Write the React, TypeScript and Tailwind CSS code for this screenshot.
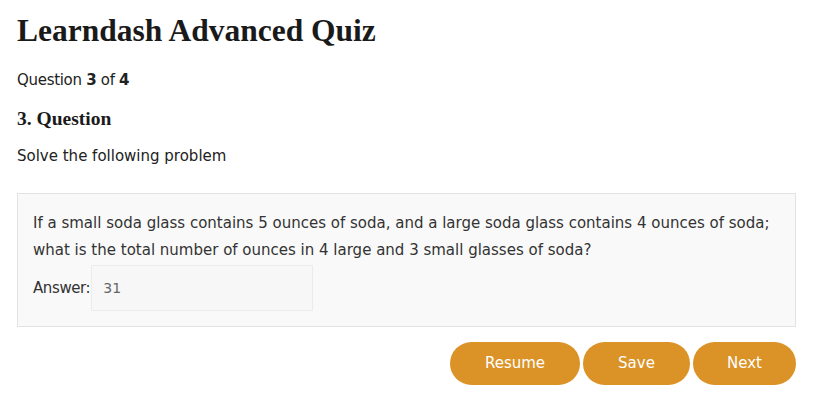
import { FC } from 'react';

const serif = { fontFamily: '"Liberation Serif", "DejaVu Serif", serif' };

const QuizButton: FC<{ label: string; className?: string }> = ({ label, className }) => (
  <button
    type="button"
    className={`h-[43px] rounded-full bg-[#db9327] text-[15px] text-white ${className ?? ''}`}
  >
    {label}
  </button>
);

const App: FC = () => {
  return (
    <div
      className="min-h-[404px] w-[835px] bg-white px-[17px] pt-[12px] text-[#222] text-[15px]"
      style={{ fontFamily: '"DejaVu Sans", "Noto Sans", sans-serif' }}
    >
      <h1 className="text-[31.5px] font-bold leading-[38px] text-[#1a1a1a]" style={serif}>
        Learndash Advanced Quiz
      </h1>

      <div className="mt-[20px] leading-[20px] tracking-[-0.3px]">
        Question <span className="font-bold">3</span> of <span className="font-bold">4</span>
      </div>

      <h3 className="mt-[18px] text-[19.5px] font-bold leading-[22px] text-[#1a1a1a]" style={serif}>
        3. Question
      </h3>

      <p className="mt-[16px] leading-[20px]">Solve the following problem</p>

      <div className="mt-[27px] w-[779px] border border-[#e3e3e3] bg-[#f9f9f9] px-[15px] pb-[15px] pt-[16px]">
        <p className="leading-[27px] text-[#333]">
          If a small soda glass contains 5 ounces of soda, and a large soda glass contains 4 ounces of soda;
          <br />
          what is the total number of ounces in 4 large and 3 small glasses of soda?
        </p>
        <div className="mt-[1px] flex items-center">
          <span className="tracking-[-0.4px] text-[#333]">Answer:</span>
          <div className="ml-[1px] flex h-[46px] w-[222px] items-center border border-[#ececec] bg-[#f7f7f7] px-[11px] text-[14px] text-[#666]">
            31
          </div>
        </div>
      </div>

      <div className="mt-[15px] flex w-[779px] justify-end gap-[3px]">
        <QuizButton label="Resume" className="w-[130px]" />
        <QuizButton label="Save" className="w-[107px]" />
        <QuizButton label="Next" className="w-[103px]" />
      </div>
    </div>
  );
};

export default App;
